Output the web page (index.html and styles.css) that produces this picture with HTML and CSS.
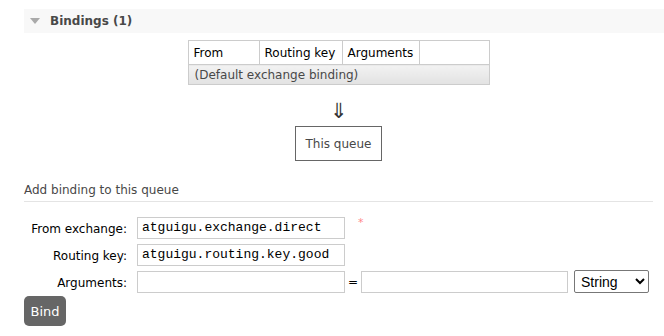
FILE: index.html
```html
<!DOCTYPE html>
<html lang="en">
<head>
  <meta charset="UTF-8" />
  <title>Queue bindings</title>
  <link rel="stylesheet" href="styles.css">
</head>
<body>
  <div class="section">
    <!-- Cabeçalho recolhível -->
    <h2 class="toggle"><span class="tri"></span>Bindings (1)</h2>

    <div class="bindings">
      <table class="list">
        <tr>
          <th class="c1">From</th>
          <th class="c2">Routing key</th>
          <th class="c3">Arguments</th>
          <th class="c4"></th>
        </tr>
        <tr class="default">
          <td colspan="4">(Default exchange binding)</td>
        </tr>
      </table>
      <div class="arrow">&#8659;</div>
      <div class="this-queue">This queue</div>
    </div>

    <!-- Formulário de novo binding -->
    <h3 class="add-title">Add binding to this queue</h3>
    <form class="add-form">
      <div class="row">
        <label for="source">From exchange:</label>
        <input type="text" id="source" value="atguigu.exchange.direct" />
        <span class="req">*</span>
      </div>
      <div class="row">
        <label for="routing">Routing key:</label>
        <input type="text" id="routing" value="atguigu.routing.key.good" />
      </div>
      <div class="row">
        <label for="argk">Arguments:</label>
        <input type="text" id="argk" />
        <span class="eq">=</span>
        <input type="text" id="argv" />
        <select class="type">
          <option>String</option>
          <option>Number</option>
          <option>Boolean</option>
        </select>
      </div>
      <button type="submit" class="bind">Bind</button>
    </form>
  </div>
</body>
</html>
```

FILE: styles.css
```css
* { box-sizing: border-box; margin: 0; padding: 0; }
body { font-family: "DejaVu Sans", Verdana, sans-serif; font-size: 12px; color: #484848; background: #fff; }
.section { padding: 9px 11px 0 24px; }
.toggle { display: flex; align-items: center; height: 24px; margin-right: -11px; padding-left: 6px; background: #f8f8f8; font-size: 12px; font-weight: bold; color: #484848; }
.tri { width: 0; height: 0; border-left: 5px solid transparent; border-right: 5px solid transparent; border-top: 6px solid #aaa; margin-right: 10px; }
.bindings { display: flex; flex-direction: column; align-items: center; padding-top: 7px; }
.list { border-collapse: collapse; color: #000; white-space: nowrap; }
.list th { font-weight: normal; text-align: left; height: 24px; padding: 0 5px; border: 1px solid #ccc; background: #fff; }
.list .c1 { width: 71px; }
.list .c2 { width: 83px; }
.list .c3 { width: 77px; }
.list .c4 { width: 70px; }
.list .default td { height: 20px; padding: 0 6px; border: 1px solid #ccc; background: linear-gradient(#f2f2f2, #e2e2e2); color: #484848; }
.arrow { margin-top: 15px; font-size: 21px; line-height: 22px; color: #333; }
.this-queue { margin-top: 4px; width: 87px; height: 35px; border: 1px solid #666; display: flex; align-items: center; justify-content: center; color: #484848; }
.add-title { margin-top: 22px; padding-bottom: 4px; border-bottom: 1px solid #e4e4e4; font-size: 12px; font-weight: normal; color: #484848; }
.add-form { padding-top: 12px; }
.row { display: flex; align-items: center; height: 27px; color: #000; }
.row label { width: 103px; text-align: right; margin-right: 10px; padding-top: 2px; }
.row input { width: 208px; height: 22px; border: 1px solid #ccc; padding: 0 4px; font-family: "Liberation Mono", "Courier New", monospace; font-size: 13px; color: #000; }
.req { color: #f88; margin-left: 13px; align-self: flex-start; padding-top: 2px; font-size: 11px; }
.eq { width: 16px; text-align: center; }
.row #argv { width: 207px; }
.type { margin-left: 6px; width: 75px; height: 23px; border: 1px solid #777; border-radius: 2px; font-family: "Liberation Sans", Arial, sans-serif; font-size: 14px; color: #000; background: #fff; padding-left: 2px; }
.bind { margin-top: 1px; width: 42px; height: 30px; border: none; border-radius: 5px; background: #666; color: #fff; font-family: "DejaVu Sans", Verdana, sans-serif; font-size: 13px; }
```
